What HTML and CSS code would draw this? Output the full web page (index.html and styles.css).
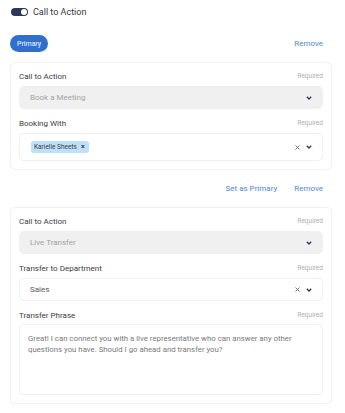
FILE: index.html
```html
<!DOCTYPE html>
<html lang="en">
<head>
    <meta charset="UTF-8">
    <meta name="viewport" content="width=device-width, initial-scale=1.0">
    <title>Call to Action</title>
    <link rel="stylesheet" href="styles.css">
</head>
<body>
    <div class="page">
        <!-- Переключатель -->
        <div class="toggle-row">
            <span class="switch"><span class="knob"></span></span>
            <span class="toggle-label">Call to Action</span>
        </div>

        <div class="action-row">
            <span class="pill">Primary</span>
            <a class="link" href="#">Remove</a>
        </div>

        <!-- Первая карточка -->
        <div class="card">
            <div class="field">
                <div class="field-head">
                    <span class="label">Call to Action</span>
                    <span class="req">Required</span>
                </div>
                <div class="select disabled">
                    <span class="value">Book a Meeting</span>
                    <span class="icons">
                        <svg class="chevron" width="6" height="4" viewBox="0 0 6 4"><path d="M0.8 0.8l2.2 2.2 2.2-2.2" fill="none" stroke="#2d3958" stroke-width="1.3"/></svg>
                    </span>
                </div>
            </div>
            <div class="field">
                <div class="field-head">
                    <span class="label">Booking With</span>
                    <span class="req">Required</span>
                </div>
                <div class="select tall">
                    <span class="tag">Karielle Sheets <span class="tag-x">×</span></span>
                    <span class="icons">
                        <svg class="clear" width="5" height="5" viewBox="0 0 5 5"><path d="M0.5 0.5l4 4M4.5 0.5l-4 4" fill="none" stroke="#666" stroke-width="0.9"/></svg>
                        <svg class="chevron" width="6" height="4" viewBox="0 0 6 4"><path d="M0.8 0.8l2.2 2.2 2.2-2.2" fill="none" stroke="#2d3958" stroke-width="1.3"/></svg>
                    </span>
                </div>
            </div>
        </div>

        <div class="action-row end">
            <a class="link" href="#">Set as Primary</a>
            <a class="link" href="#">Remove</a>
        </div>

        <!-- Вторая карточка -->
        <div class="card">
            <div class="field">
                <div class="field-head">
                    <span class="label">Call to Action</span>
                    <span class="req">Required</span>
                </div>
                <div class="select disabled">
                    <span class="value">Live Transfer</span>
                    <span class="icons">
                        <svg class="chevron" width="6" height="4" viewBox="0 0 6 4"><path d="M0.8 0.8l2.2 2.2 2.2-2.2" fill="none" stroke="#2d3958" stroke-width="1.3"/></svg>
                    </span>
                </div>
            </div>
            <div class="field">
                <div class="field-head">
                    <span class="label">Transfer to Department</span>
                    <span class="req">Required</span>
                </div>
                <div class="select">
                    <span class="value dark">Sales</span>
                    <span class="icons">
                        <svg class="clear" width="5" height="5" viewBox="0 0 5 5"><path d="M0.5 0.5l4 4M4.5 0.5l-4 4" fill="none" stroke="#666" stroke-width="0.9"/></svg>
                        <svg class="chevron" width="6" height="4" viewBox="0 0 6 4"><path d="M0.8 0.8l2.2 2.2 2.2-2.2" fill="none" stroke="#2d3958" stroke-width="1.3"/></svg>
                    </span>
                </div>
            </div>
            <div class="field">
                <div class="field-head short">
                    <span class="label">Transfer Phrase</span>
                    <span class="req">Required</span>
                </div>
                <div class="textarea">Great! I can connect you with a live representative who can answer any other questions you have. Should I go ahead and transfer you?</div>
            </div>
        </div>
    </div>
</body>
</html>
```

FILE: styles.css
```css
body {
    margin: 0;
    background: #fff;
    font-family: Roboto, "Liberation Sans", sans-serif;
    color: #333;
}

.page {
    padding: 0 13px 0 10px;
}

/* Переключатель сверху */
.toggle-row {
    display: flex;
    align-items: center;
    gap: 5px;
    padding-top: 7px;
    height: 9px;
}

.switch {
    display: flex;
    align-items: center;
    justify-content: flex-end;
    width: 17px;
    height: 8px;
    padding: 0 1px;
    box-sizing: border-box;
    border-radius: 4px;
    background: #2c3856;
    margin-left: 1px;
}

.knob {
    width: 6px;
    height: 6px;
    border-radius: 50%;
    background: #fff;
}

.toggle-label {
    font-size: 9px;
    color: #3a3a3a;
}

/* Строки с кнопками */
.action-row {
    display: flex;
    align-items: center;
    justify-content: space-between;
    height: 17px;
    padding-right: 9px;
    margin-bottom: 10px;
}

.toggle-row + .action-row {
    margin-top: 19px;
}

.action-row.end {
    justify-content: flex-end;
    gap: 17px;
    margin-top: 10px;
}

.pill {
    display: flex;
    align-items: center;
    height: 17px;
    padding: 0 7px;
    border-radius: 9px;
    background: #2f6fcf;
    color: #fff;
    font-size: 7px;
}

.link {
    color: #5087d9;
    font-size: 8px;
    text-decoration: none;
}

/* Карточки */
.card {
    border: 1px solid #f0f0f0;
    border-radius: 5px;
    padding: 8px;
}

.field + .field {
    margin-top: 9px;
}

.field-head {
    display: flex;
    align-items: center;
    justify-content: space-between;
    height: 10px;
    margin-bottom: 5px;
}

.field-head.short {
    margin-bottom: 4px;
}

.label {
    font-size: 8px;
    color: #3d3d3d;
}

.req {
    font-size: 6.5px;
    color: #b0b0b0;
}

.select {
    display: flex;
    align-items: center;
    justify-content: space-between;
    height: 23px;
    box-sizing: border-box;
    padding: 0 10px 0 10px;
    border: 1px solid #f0f0f0;
    border-radius: 5px;
    background: #fff;
}

.select.disabled {
    background: #f0f0f0;
}

.select.tall {
    height: 28px;
    padding-left: 11px;
}

.value {
    font-size: 8px;
    color: #a3a3a3;
}

.value.dark {
    color: #5a5a5a;
}

.icons {
    display: flex;
    align-items: center;
    gap: 6px;
}

.tag {
    display: flex;
    align-items: center;
    gap: 4px;
    height: 12px;
    padding: 0 4px 0 3px;
    border-radius: 3px;
    background: #bfe0fb;
    color: #3a3a3a;
    font-size: 6.5px;
}

.tag-x {
    font-size: 7px;
    font-weight: 700;
    color: #2d3958;
}

.textarea {
    height: 71px;
    box-sizing: border-box;
    padding: 9px 8px;
    border: 1px solid #f0f0f0;
    border-radius: 5px;
    font-size: 7.8px;
    line-height: 10.5px;
    color: #7a7a7a;
}
```
